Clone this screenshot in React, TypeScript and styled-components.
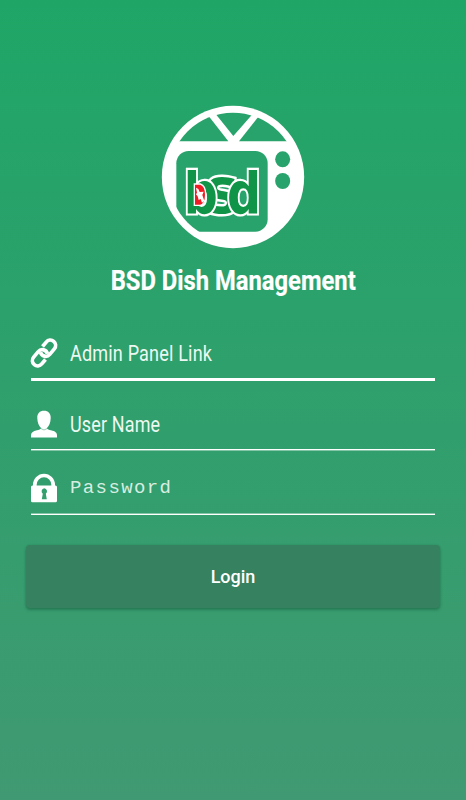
import React from "react";
import styled, { createGlobalStyle } from "styled-components";

const GlobalStyle = createGlobalStyle`
  * { box-sizing: border-box; }
  body { margin: 0; font-family: Roboto, "Liberation Sans", sans-serif; }
`;

const Screen = styled.main`
  width: 100%;
  height: 800px;
  padding: 105px 26px 0;
  display: flex;
  flex-direction: column;
  background: linear-gradient(#1fa667, #409972);
  color: #fff;
  overflow: hidden;
`;

const Logo = styled.svg`
  display: block;
  width: 144px;
  height: 144px;
  align-self: center;
`;

const Title = styled.h1`
  margin: 15px 0 0;
  height: 34px;
  line-height: 34px;
  font-size: 27px;
  font-weight: 700;
  text-align: center;
  white-space: nowrap;
  -webkit-text-stroke: 0.2px #fff;
`;

const Condensed = styled.span<{ $scale: number; $origin?: string }>`
  display: inline-block;
  white-space: nowrap;
  transform: scaleX(${(p) => p.$scale});
  transform-origin: ${(p) => p.$origin ?? "left"} center;
`;

const Form = styled.form`
  display: flex;
  flex-direction: column;
  margin-top: 30px;
`;

const Field = styled.label<{ $height: number; $top: number; $line: number; $edge: string }>`
  display: flex;
  align-items: flex-start;
  gap: 13px;
  margin: 0 5px;
  height: ${(p) => p.$height}px;
  padding-top: ${(p) => p.$top}px;
  border-bottom: ${(p) => p.$line}px solid #fff;
  box-shadow: ${(p) => p.$edge};
`;

const FieldIcon = styled.svg`
  display: block;
  flex: none;
  width: 26px;
  height: 30px;
  overflow: visible;
`;

const Hint = styled.span<{ $mono?: boolean }>`
  line-height: ${(p) => (p.$mono ? 30 : 32)}px;
  font-size: ${(p) => (p.$mono ? 19 : 21.5)}px;
  font-family: ${(p) => (p.$mono ? '"Liberation Mono", monospace' : "inherit")};
  letter-spacing: ${(p) => (p.$mono ? "1.4px" : "0.2px")};
  color: ${(p) => (p.$mono ? "#d6eee2" : "#edf8f2")};
`;

const LoginButton = styled.button`
  height: 63px;
  margin-top: 30px;
  padding: 0;
  border: 0;
  border-radius: 4px;
  background: #368260;
  box-shadow: 0 2px 3px rgba(0, 55, 30, 0.3), 0 0 2px rgba(0, 55, 30, 0.15);
  color: #fff;
  font: 500 18px/63px Roboto, sans-serif;
`;

const Monogram = styled.g`
  font: 700 168px "DejaVu Sans", sans-serif;
  fill: #109447;
  stroke: #fff;
  stroke-width: 13px;
  paint-order: stroke;
`;

function BrandLogo() {
  return (
    <Logo viewBox="18 15 432 432" role="img" aria-label="BSD">
      <defs>
        <clipPath id="face"><circle cx="234" cy="231" r="193" /></clipPath>
      </defs>
      <circle cx="234" cy="231" r="213.5" fill="#fff" />
      <g clipPath="url(#face)" fill="#28a36b">
        <path d="M40 124V20h99l81 104Z" />
        <path d="M182 42V20h111v22l-58 66Z" />
        <path d="m252 124 82-104h100v104Z" />
        <rect x="64" y="153" width="274" height="242" rx="37" />
      </g>
      <g fill="#28a36b">
        <ellipse cx="383" cy="178" rx="22.5" ry="24" />
        <ellipse cx="383" cy="243" rx="22.5" ry="24" />
      </g>
      <Monogram>
        <text transform="translate(151 340) scale(1.02 1.14)">s</text>
        <text transform="translate(86.500 340) scale(.85 1.02)">b</text>
        <text transform="translate(216 340) scale(.85 1.02)">d</text>
      </Monogram>
      <path d="M118 252h18q16 5 16 32t-16 32h-18Z" fill="#ef1c24" stroke="#fff" strokeWidth="4" />
      <path d="m123 263 7 4 4 9 12-1-4 10 6 18-7 5-4-11-6 3-3-11-5-6 3-5Z" fill="#fff" />
    </Logo>
  );
}

function LinkIcon() {
  return (
    <FieldIcon viewBox="0 0 26 30" fill="none" stroke="#fff" strokeWidth="3.7">
      <g transform="rotate(-50 13 15)">
        <path d="M9 20.300H3.200a5.300 5.300 0 0 1 0-10.600h7.200a5.300 5.300 0 0 1 4.200 8.500" />
        <path d="M17 9.700h5.800a5.300 5.300 0 0 1 0 10.600h-7.200a5.300 5.300 0 0 1-4.200-8.500" />
      </g>
    </FieldIcon>
  );
}

function UserIcon() {
  return (
    <FieldIcon viewBox="0 0 26 30" fill="#fff">
      <path d="M13 1.800c4.200 0 6.900 2.700 6.700 7.200-.1 4.400-1.500 8-3.900 10.300.8 1.200 2.100 1.500 4.200 2 4.200 1 6 2.500 6 5v2.300H0v-2.300c0-2.500 1.800-4 6-5 2.100-.5 3.400-.8 4.200-2C7.800 17 6.400 13.400 6.300 9 6.100 4.500 8.800 1.800 13 1.800Z" />
      <path d="M9.800 19.500q3.200 3 6.400 0" fill="none" stroke="#2f9f6c" strokeWidth=".5" />
    </FieldIcon>
  );
}

function LockIcon() {
  return (
    <FieldIcon viewBox="0 0 26 30">
      <path d="M3.800 15v-3a9.200 9.500 0 0 1 18.400 0V15" fill="none" stroke="#fff" strokeWidth="3.700" />
      <rect y="12.500" width="26" height="16.700" rx="1.500" fill="#fff" />
      <path d="M13.300 15.300a3 3 0 0 1 1.500 5.400l1 5.500h-5l1-5.500a3 3 0 0 1 1.500-5.400Z" fill="#329f6d" />
    </FieldIcon>
  );
}

export default function App() {
  return (
    <>
      <GlobalStyle />
      <Screen>
        <BrandLogo />
        <Title><Condensed $scale={0.88} $origin="center">BSD Dish Management</Condensed></Title>
        <Form>
          <Field $height={53} $top={10} $line={3} $edge="none">
            <LinkIcon />
            <Hint><Condensed $scale={0.84}>Admin Panel Link</Condensed></Hint>
          </Field>
          <Field $height={69} $top={28} $line={1} $edge="0 1px rgba(255, 255, 255, .4)">
            <UserIcon />
            <Hint><Condensed $scale={0.835}>User Name</Condensed></Hint>
          </Field>
          <Field $height={65} $top={23} $line={1} $edge="inset 0 -1px rgba(255, 255, 255, .4)">
            <LockIcon />
            <Hint $mono>Password</Hint>
          </Field>
          <LoginButton type="button">Login</LoginButton>
        </Form>
      </Screen>
    </>
  );
}
